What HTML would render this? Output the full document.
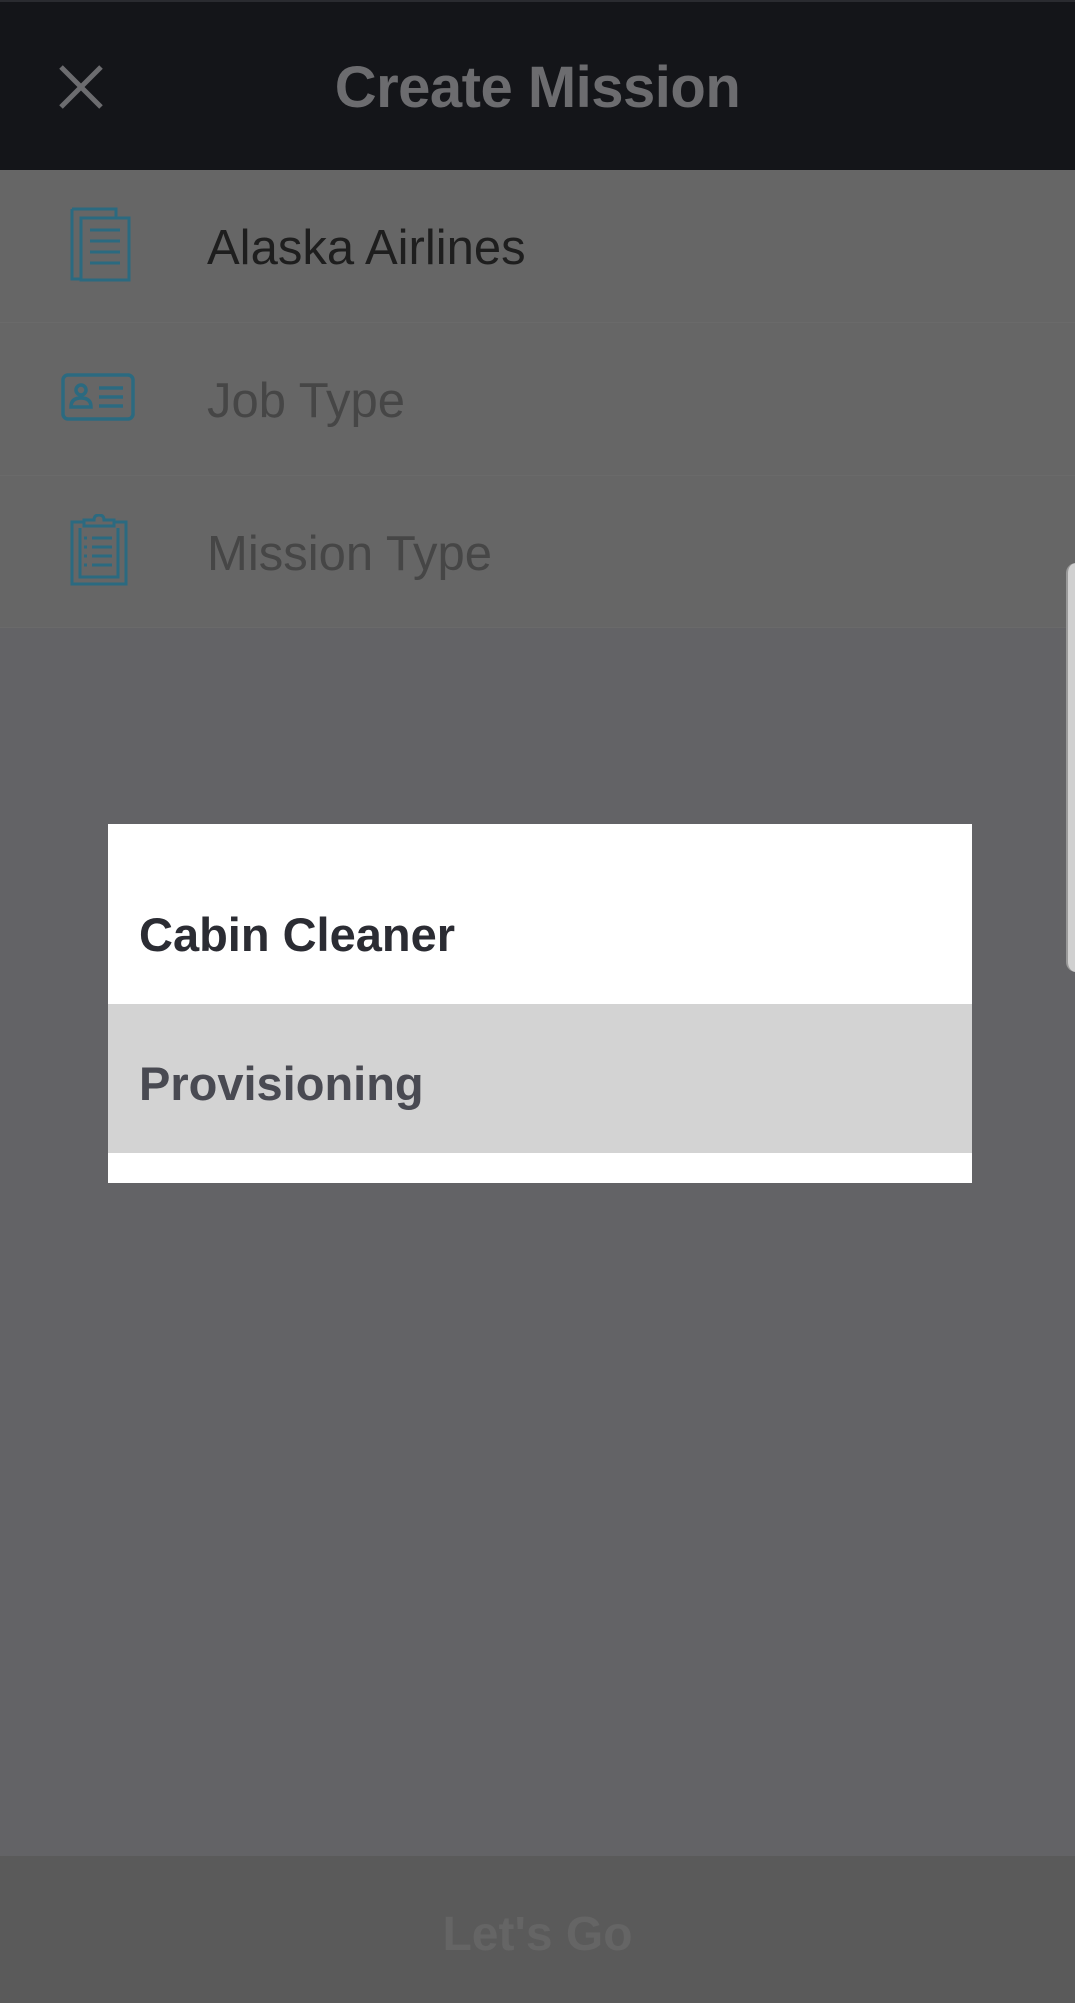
<!DOCTYPE html>
<html><head><meta charset="utf-8"><style>
*{margin:0;padding:0;box-sizing:border-box}
body{width:1075px;height:2003px;background:#636366;position:relative;overflow:hidden;font-family:"Liberation Sans",sans-serif}
.hdr{position:absolute;left:0;top:0;width:1075px;height:170px;background:#141519;border-top:2px solid #2a2b30}
.title{position:absolute;left:0;width:1075px;top:52px;text-align:center;font-size:58px;font-weight:bold;color:#6c6c6f;letter-spacing:-0.5px}
.row{position:absolute;left:0;width:1075px;height:153px;background:#666666;border-bottom:1px solid #6a6a6a}
.row span{position:absolute;left:207px;top:50px;font-size:49px;color:#464646}
.dlg{position:absolute;left:108px;top:824px;width:864px;height:359px;background:#fff}
.sel{position:absolute;left:0;top:180px;width:864px;height:149px;background:#d3d3d3}
.it{position:absolute;left:31px;font-size:47px;font-weight:bold}
.bot{position:absolute;left:0;top:1856px;width:1075px;height:147px;background:#5a5a5a}
.pill{position:absolute;left:1066px;top:563px;width:20px;height:409px;background:#d0d0d0;border-radius:10px 0 0 10px;border-left:2px solid #9a9a9a}
</style></head><body>
<div class="hdr">
<svg style="position:absolute;left:59px;top:63px" width="44" height="44" viewBox="0 0 44 44"><path d="M2 2L42 42M42 2L2 42" stroke="#6c6c6f" stroke-width="5"/></svg>
<div class="title">Create Mission</div>
</div>
<div class="row" style="top:170px"><span style="color:#1e1e1e">Alaska Airlines</span>
<svg style="position:absolute;left:70px;top:37px" width="62" height="76" viewBox="0 0 62 76" fill="none" stroke="#2b6a80" stroke-width="3"><path d="M2 2H46V10M10 72H2V2"/><rect x="11" y="11" width="48" height="62"/><path d="M20 23H50M20 34H50M20 45H50M20 56H50"/></svg>
</div>
<div class="row" style="top:323px"><span>Job Type</span>
<svg style="position:absolute;left:61px;top:50px" width="74" height="48" viewBox="0 0 74 48" fill="none" stroke="#2b6a80" stroke-width="3.5"><rect x="2" y="2" width="70" height="44" rx="5"/><circle cx="20" cy="17" r="5"/><path d="M10 34Q10 25 20 25Q30 25 30 34Z"/><path d="M38 15H62M38 24H62M38 33H62"/></svg>
</div>
<div class="row" style="top:476px;height:152px"><span>Mission Type</span>
<svg style="position:absolute;left:70px;top:38px" width="60" height="72" viewBox="0 0 60 72" fill="none" stroke="#2b6a80" stroke-width="3"><path d="M14 8H2V70H56V8H44"/><path d="M14 12V6H24Q24 1 29 1Q34 1 34 6H44V12Z"/><path d="M10 14V63H48V14"/><path d="M14 24h3M14 33h3M14 42h3M14 51h3M22 24H42M22 33H42M22 42H42M22 51H42"/></svg>
</div>
<div class="pill"></div>
<div class="dlg">
<div class="it" style="top:83px;color:#2b2c33">Cabin Cleaner</div>
<div class="sel"><div class="it" style="top:52px;color:#494a52">Provisioning</div></div>
</div>
<div class="bot"><div style="position:absolute;left:0;width:1075px;top:51px;text-align:center;font-size:48px;font-weight:bold;color:#656565">Let's Go</div></div>
</body></html>
